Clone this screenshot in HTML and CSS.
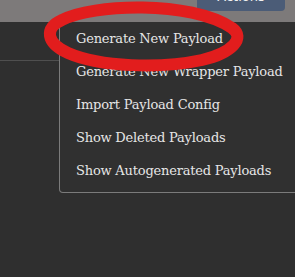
FILE: index.html
```html
<!DOCTYPE html>
<html>
<head>
<meta charset="utf-8">
<link rel="stylesheet" href="styles.css">
</head>
<body>
<div class="topbar">
  <button class="actions"><span class="actions-label">Actions</span></button>
</div>
<div class="main">
  <div class="side">
    <div class="side-head"></div>
  </div>
  <div class="content"></div>
</div>
<ul class="menu">
  <li class="item">Generate New Payload</li>
  <li class="item">Generate New Wrapper Payload</li>
  <li class="item">Import Payload Config</li>
  <li class="item">Show Deleted Payloads</li>
  <li class="item">Show Autogenerated Payloads</li>
</ul>
<svg class="scribble" width="295" height="277" viewBox="0 0 295 277">
  <path d="M 62 20 C 92 4, 190 0, 232 28 C 246 38, 232 53, 202 60 C 160 69, 100 67, 68 53 C 46 43, 44 28, 62 20 Z" fill="none" stroke="#e21d1d" stroke-width="12" stroke-linecap="round" stroke-linejoin="round"/>
</svg>
</body>
</html>
```

FILE: styles.css
```css
html, body {
  margin: 0;
  padding: 0;
  width: 295px;
  height: 277px;
  overflow: hidden;
  background: #2f2f2f;
  font-family: "DejaVu Serif", serif;
}
.topbar {
  height: 22px;
  background: #7d7a7a;
  display: flex;
  justify-content: flex-end;
  align-items: flex-start;
  padding-right: 10px;
}
.actions {
  width: 88px;
  height: 11px;
  border: none;
  border-radius: 0 0 4px 4px;
  background: #4b5c77;
  color: #f2f2f2;
  font-family: "DejaVu Sans", sans-serif;
  font-size: 13px;
  line-height: 13px;
  padding: 0;
  margin: 0;
  overflow: hidden;
  display: flex;
  align-items: flex-start;
  justify-content: center;
}
.actions-label {
  margin-top: -10px;
}
.main {
  display: flex;
  height: 255px;
}
.side {
  width: 59px;
}
.side-head {
  height: 38px;
  border-bottom: 1px solid #4f4f4f;
}
.content {
  flex: 1;
}
.menu {
  position: absolute;
  left: 59px;
  top: 22px;
  width: 260px;
  margin: 0;
  padding: 0 0 5px 0;
  list-style: none;
  background: #303030;
  border: 1px solid #7b7b7b;
  border-top: none;
  border-radius: 0 0 0 4px;
}
.item {
  height: 33px;
  display: flex;
  align-items: center;
  padding-left: 16px;
  color: #e6e6e6;
  font-size: 13px;
  letter-spacing: -0.2px;
  white-space: nowrap;
}
.scribble {
  position: absolute;
  left: 0;
  top: 0;
  pointer-events: none;
}
```
